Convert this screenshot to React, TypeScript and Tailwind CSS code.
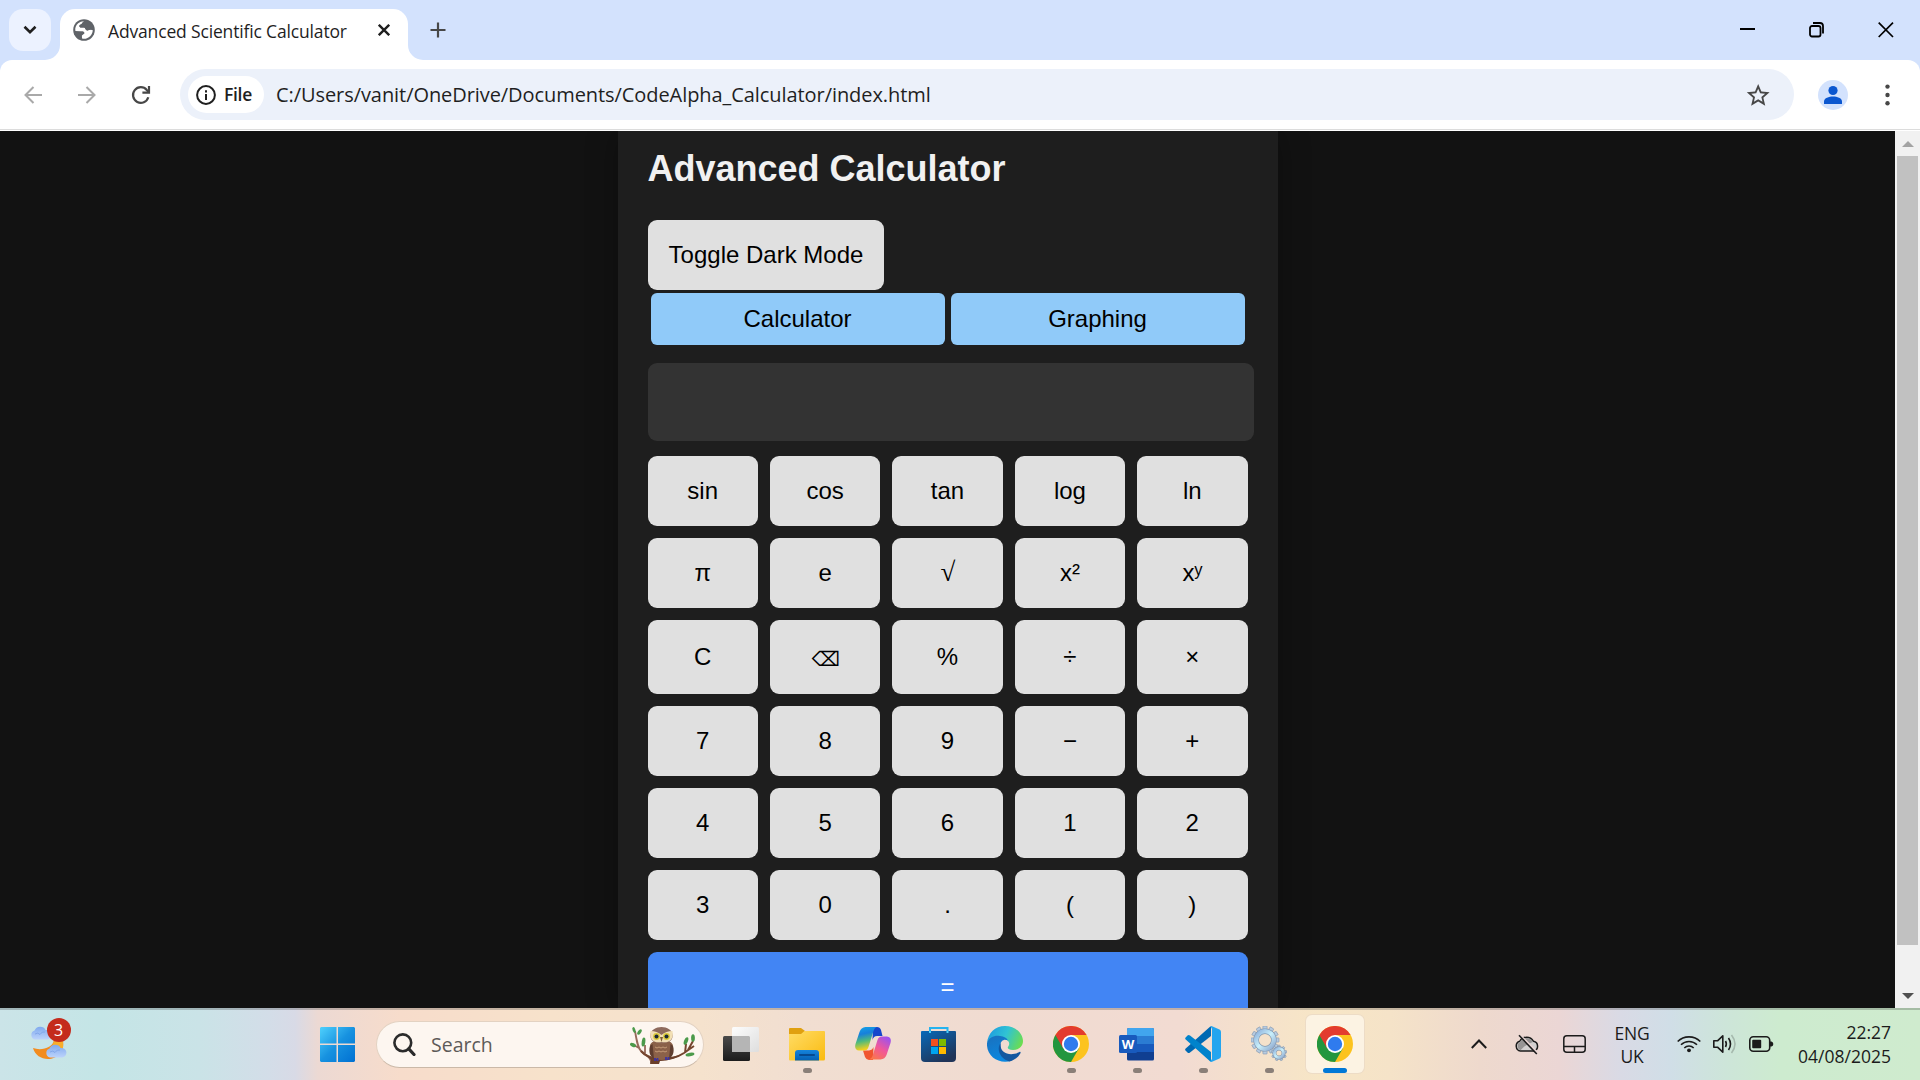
import React, { type ReactNode } from "react";

const ui = "font-['Open_Sans','Noto_Sans',sans-serif]";

const rows: string[][] = [
  ["sin", "cos", "tan", "log", "ln"],
  ["π", "e", "√", "x²", "xʸ"],
  ["C", "⌫", "%", "÷", "×"],
  ["7", "8", "9", "−", "+"],
  ["4", "5", "6", "1", "2"],
  ["3", "0", ".", "(", ")"],
];

function TabStrip() {
  return (
    <div className="flex h-[60px] shrink-0 items-start bg-[#d3e2fd]">
      <div className="mt-[9px] ml-[9px] flex size-[42px] items-center justify-center rounded-[14px] bg-[#ecf2ff]">
        <svg width="14" height="10" viewBox="0 0 14 10" fill="none" stroke="#1f1f1f" strokeWidth="2.6">
          <path d="M1.5 1.8 L7 7.2 L12.5 1.8" />
        </svg>
      </div>
      <div className="relative mt-[9px] ml-[9px] flex h-[51px] w-[348px] items-start rounded-t-[15px] bg-white">
        <svg className="absolute bottom-0 -left-[15px]" width="15" height="15" fill="#fff">
          <path d="M15 0 V15 H0 A15 15 0 0 0 15 0Z" />
        </svg>
        <svg className="absolute -right-[15px] bottom-0" width="15" height="15" fill="#fff">
          <path d="M0 0 V15 H15 A15 15 0 0 1 0 0Z" />
        </svg>
        <svg className="mt-[10px] ml-[13px] shrink-0" width="22" height="22" viewBox="0 0 22 22">
          <circle cx="11" cy="11" r="10.8" fill="#5f6368" />
          <path
            d="M12.3 2.3 C9 3 9.3 5.2 7.6 5.6 C5.8 6 6 8 7.3 8.4 L11.2 8.6 C12.6 8.8 12.2 11.2 14 11.4 C15.6 11.6 16 10.4 17.6 10.6 L19.8 11.2 C19.5 15.8 15.8 19.7 11.2 19.8 C10.2 19.8 9.2 19.5 9 19.2 L8.9 16.4 L11.4 14.4 C11.8 12.4 9 12.2 7.4 12.2 L2.4 12 C1.7 9 3 6 5.2 4.2 C7.2 2.5 10 1.8 12.3 2.3Z"
            fill="#fff"
          />
          <path d="M12.3 1.6 C9 2.6 9.8 5 7.8 5.6 C6 6.2 6.2 8 7.4 8.4 L11.2 8.6 C12.6 9 12.2 11.2 14 11.4 C15.6 11.6 16 10.4 20.4 10.6 C20.3 6 17 2 12.3 1.6Z" fill="#5f6368" />
        </svg>
        <span className={`${ui} mt-[9px] ml-[13px] w-[245px] text-[17.5px] leading-[27px] tracking-[-0.16px] whitespace-nowrap text-[#1f1f1f]`}>
          Advanced Scientific Calculator
        </span>
        <svg className="mt-[15px] ml-[25px] shrink-0" width="12" height="12" viewBox="0 0 12 12" stroke="#1f1f1f" strokeWidth="2.4">
          <path d="M0.8 0.8 L11.2 11.2 M11.2 0.8 L0.8 11.2" />
        </svg>
      </div>
      <svg className="mt-[22px] ml-[22px]" width="16" height="16" viewBox="0 0 16 16" stroke="#474747" strokeWidth="2.2">
        <path d="M8 0.5 V15.5 M0.5 8 H15.5" />
      </svg>
      <div className="mt-[22px] mr-[26px] ml-auto flex gap-[54px]">
        <svg width="15" height="16" stroke="#000" strokeWidth="2">
          <path d="M0 7 H15" />
        </svg>
        <svg width="15" height="16" viewBox="0 0 15 16" fill="none" stroke="#000" strokeWidth="1.8">
          <rect x="1" y="4" width="10.5" height="10.5" rx="2" />
          <path d="M4 1 H11 Q14 1 14 4 V11.5" />
        </svg>
        <svg width="16" height="16" viewBox="0 0 16 16" stroke="#000" strokeWidth="1.7">
          <path d="M0.7 0.7 L15 15 M15 0.7 L0.7 15" />
        </svg>
      </div>
    </div>
  );
}

function Toolbar() {
  return (
    <div className="flex h-[71px] shrink-0 bg-[#d3e2fd]">
      <div className="flex h-[71px] w-full items-start rounded-t-[12px] bg-white pt-[9px] shadow-[inset_0_-1px_0_#fff,inset_0_-2px_0_#dcdcdc]">
        <svg className="mt-[17px] ml-[24px]" width="18" height="18" viewBox="0 0 18 18" fill="none" stroke="#a9a9a9" strokeWidth="2">
          <path d="M18 9 H1.5 M9.5 1 L1.5 9 L9.5 17" />
        </svg>
        <svg className="mt-[17px] ml-[36px]" width="18" height="18" viewBox="0 0 18 18" fill="none" stroke="#a9a9a9" strokeWidth="2">
          <path d="M0 9 H16.5 M8.5 1 L16.5 9 L8.5 17" />
        </svg>
        <svg className="mt-[16px] ml-[35px]" width="20" height="20" viewBox="0 0 20 20" fill="none" stroke="#474747" strokeWidth="2.2">
          <path d="M17.3 12.2 A7.8 7.8 0 1 1 15.8 5 L17.6 7" />
          <path d="M18 1 V7.6 H11.4" />
        </svg>
        <div className="ml-[29px] flex h-[51px] w-[1614px] items-center rounded-full bg-[#ecf1fa] pl-[8px]">
          <div className="flex h-[37px] w-[76px] items-center rounded-full bg-white pl-[8px]">
            <svg width="20" height="20" viewBox="0 0 20 20" fill="none" stroke="#1f1f1f" strokeWidth="2">
              <circle cx="10" cy="10" r="8.9" />
              <path d="M10 9 V15 M10 5.3 V7.4" />
            </svg>
            <span className={`${ui} ml-[8px] text-[17.5px] font-semibold text-[#1f1f1f] tracking-[-0.3px]`}>File</span>
          </div>
          <span className={`${ui} ml-[12px] text-[20px] tracking-[-0.07px] whitespace-nowrap text-[#1f1f1f]`}>
            C:/Users/vanit/OneDrive/Documents/CodeAlpha_Calculator/index.html
          </span>
          <svg className="mr-[24px] ml-auto" width="24" height="24" viewBox="0 0 24 24" fill="#474747">
            <path d="M22 9.24l-7.19-.62L12 2 9.19 8.63 2 9.24l5.46 4.73L5.82 21 12 17.27 18.18 21l-1.63-7.03L22 9.24zM12 15.4l-3.76 2.27 1-4.28-3.32-2.88 4.38-.38L12 6.1l1.71 4.04 4.38.38-3.32 2.88 1 4.28L12 15.4z" transform="translate(-1.5 -1.3) scale(1.14)" />
          </svg>
        </div>
        <svg className="mt-[11px] ml-[24px]" width="30" height="30" viewBox="0 0 30 30">
          <circle cx="15" cy="15" r="15" fill="#d3e2fd" />
          <g fill="#0b57d0">
            <circle cx="15" cy="10.5" r="4.6" />
            <path d="M6 24 V21.5 C6 18 11 16.6 15 16.6 S24 18 24 21.5 V24Z" />
          </g>
        </svg>
        <svg className="mt-[15px] ml-[36.5px]" width="5" height="22" fill="#474747">
          <circle cx="2.5" cy="2.6" r="2.2" />
          <circle cx="2.5" cy="11" r="2.2" />
          <circle cx="2.5" cy="19.2" r="2.2" />
        </svg>
      </div>
    </div>
  );
}

function Key({ label, tall }: { label: string; tall: boolean }) {
  return (
    <button className={`flex items-center justify-center rounded-[9px] bg-[#e0e0e0] text-[24px] leading-[28px] text-black ${tall ? "h-[74px]" : "h-[70px]"}`}>
      {label === "⌫" ? (
        <span className="pt-[4px] pl-[1px] font-['DejaVu_Sans',sans-serif] text-[20px]">⌫</span>
      ) : label === "√" ? (
        <span className="pb-[2px] pl-[1px] font-['Liberation_Serif',serif] text-[27px]">√</span>
      ) : (
        label
      )}
    </button>
  );
}

function Calculator() {
  return (
    <div className="h-[877px] w-[660px] overflow-hidden bg-[#1e1e1e] px-[30px] font-['Liberation_Sans',Arial,sans-serif] shadow-[0_0_30px_rgba(0,0,0,0.3)]">
      <h1 className="mt-[17px] text-[36px] leading-[42px] font-bold text-[#f1f1f1]">Advanced Calculator</h1>
      <button className="mt-[30px] flex h-[70px] w-[236px] items-center justify-center rounded-[9px] bg-[#e0e0e0] pl-[1px] text-[24px] text-black">
        Toggle Dark Mode
      </button>
      <div className="mt-[3px] flex gap-[6px] px-[3px]">
        <button className="h-[52px] flex-1 rounded-[6px] bg-[#90caf9] text-[24px] text-black">Calculator</button>
        <button className="h-[52px] flex-1 rounded-[6px] bg-[#90caf9] text-[24px] text-black">Graphing</button>
      </div>
      <div className="mt-[18px] h-[78px] w-[606px] rounded-[9px] bg-[#333]" />
      <div className="mt-[15px] grid grid-cols-5 gap-[12px]">
        {rows.flatMap((row, r) => row.map((label) => <Key key={label} label={label} tall={r === 2} />))}
        <button className="col-span-5 h-[70px] rounded-[9px] bg-[#4285f4] text-[24px] text-white">=</button>
      </div>
    </div>
  );
}

function Scrollbar() {
  return (
    <div className="flex w-[25px] shrink-0 flex-col items-center bg-[#f1f1f1]">
      <svg className="mt-[10px]" width="12" height="6" fill="#a3a3a3">
        <path d="M0 6 L6 0 L12 6Z" />
      </svg>
      <div className="mt-[9px] h-[789px] w-[21px] bg-[#c1c1c1]" />
      <svg className="mt-auto mb-[9px]" width="12" height="6" fill="#505050">
        <path d="M0 0 L6 6 L12 0Z" />
      </svg>
    </div>
  );
}

function TaskItem({ children, running, active }: { children: ReactNode; running?: boolean; active?: boolean }) {
  return (
    <div className="flex w-[66px] justify-center pt-[5px]">
      <div className={`flex h-[58px] w-[58px] flex-col items-center rounded-[6px] pt-[11px] ${active ? "bg-[#fcf3e3] shadow-[0_0_0_1px_#eddcc6]" : ""}`}>
        <div className="h-[36px] w-[36px]">{children}</div>
        {active && <div className="mt-[6px] h-[5px] w-[24px] rounded-full bg-[#0078d7]" />}
        {running && <div className="mt-[6px] h-[5px] w-[9px] rounded-full bg-[#8a7f78]" />}
      </div>
    </div>
  );
}

function Chrome() {
  return (
    <svg width="36" height="36" viewBox="0 0 36 36">
      <circle cx="18" cy="18" r="18" fill="#fcc31e" />
      <path d="M18 18 L2.4 9 A18 18 0 0 0 18 36 L25.8 22.5Z" fill="#23963f" />
      <path d="M2.4 9 A18 18 0 0 1 33.6 9 L18 9 L10.2 22.5Z" fill="#e33b2e" />
      <circle cx="18" cy="18" r="9" fill="#fff" />
      <circle cx="18" cy="18" r="7.2" fill="#2f7bee" />
    </svg>
  );
}

function Cloud({ className }: { className: string }) {
  return (
    <svg className={className} width="22" height="14" viewBox="0 0 22 14">
      <path d="M5 13.5 A4.6 4.6 0 0 1 4.6 4.6 A6 6 0 0 1 15.6 4 A4.8 4.8 0 0 1 17.5 13.5Z" fill="url(#cloud)" />
      <path d="M5 8 Q8 6 10 8.5 Q12 5 15 6" fill="none" stroke="#7ba1e6" strokeWidth=".8" />
    </svg>
  );
}

function Gear({ cx, cy, r, teeth, hole }: { cx: number; cy: number; r: number; teeth: number; hole: number }) {
  return (
    <g transform={`translate(${cx} ${cy})`}>
      {Array.from({ length: teeth }, (_, i) => (
        <rect key={i} x={-r * 0.15} y={-r} width={r * 0.3} height={r * 0.5} rx=".5" fill="#b7cbe0" stroke="#8296ae" strokeWidth=".6" transform={`rotate(${(i * 360) / teeth})`} />
      ))}
      <circle r={(r * 0.8 + hole) / 2} fill="none" stroke="#8296ae" strokeWidth={r * 0.8 - hole + 0.8} />
      <circle r={(r * 0.8 + hole) / 2} fill="none" stroke="url(#gear)" strokeWidth={r * 0.8 - hole - 0.4} />
    </g>
  );
}

function Owl() {
  return (
    <svg width="66" height="38" viewBox="0 0 66 38">
      <path d="M21 37 C22 31 15 29 11 25 C8 22 7 17 5 5 M9 22 L2 18 M15 27 L15 19" fill="none" stroke="#96695a" strokeWidth="1.8" />
      <path d="M11 25 C16 31 22 32 27 33 C40 34 48 31 54 27 L64 20 M55 27 L56 18 M58 24 L63 15" fill="none" stroke="#76462f" strokeWidth="2" />
      <path d="M16 29 Q22 34 30 31 Q42 32 52 28 Q43 35 30 35 L29 38 H20 L21 34Z" fill="#6b3f2a" />
      <g fill="#4b9a4b">
        <ellipse cx="4" cy="4" rx="1.4" ry="3" transform="rotate(-20 4 4)" />
        <ellipse cx="9.500" cy="6" rx="1.6" ry="3.200" transform="rotate(35 9.5 6)" />
        <ellipse cx="3" cy="19" rx="3.200" ry="1.800" transform="rotate(25 3 19)" />
        <ellipse cx="13.500" cy="16" rx="1.800" ry="4.600" transform="rotate(8 13.5 16)" />
        <ellipse cx="56" cy="15" rx="1.900" ry="4" transform="rotate(22 56 15)" />
        <ellipse cx="63" cy="12" rx="1.900" ry="3.800" />
        <ellipse cx="60" cy="28.500" rx="4.500" ry="1.800" transform="rotate(-8 60 28.5)" />
      </g>
      <path d="M20 20 C20 12 43 12 43 20 C44 29 39 34 31.500 34 C24 34 19 29 20 20Z" fill="#8b6149" />
      <path d="M20 20 C18 27 21 31 24 33 L22.500 18Z M43 20 C45 27 42 31 39 33 L40.500 18Z" fill="#5f3d2f" />
      <path d="M20.500 10 C20 -2 43 -2 42.500 10 C43 20 20 20 20.500 10Z" fill="#8e6a5c" />
      <path d="M20.500 5 Q27 5 31.500 9 Q36 5 42.500 5 C44 16 37 17 31.500 16 C26 17 19 16 20.500 5Z" fill="#f2dfb4" />
      <circle cx="26.500" cy="10.500" r="3.400" fill="#d9c93a" />
      <circle cx="36.500" cy="10.500" r="3.400" fill="#d9c93a" />
      <circle cx="26.500" cy="10.500" r="2" fill="#1c2a35" />
      <circle cx="36.500" cy="10.500" r="2" fill="#1c2a35" />
      <path d="M30 11 H33 L31.500 16Z" fill="#7b5b34" />
      <path d="M25 21 q2 2 4 0 q2 2 4 0 q2 2 4 0 M25 25 q2 2 4 0 q2 2 4 0 q2 2 4 0" fill="none" stroke="#c39a77" strokeWidth="1" />
      <path d="M25 32 v3 M27.500 32 v3 M36 31 v3 M38.500 31 v3" stroke="#3b33a5" strokeWidth="1.800" />
    </svg>
  );
}

function Taskbar() {
  return (
    <div className="h-[72px] shrink-0 bg-[linear-gradient(90deg,#cbe4e8_0px,#c4e5e6_100px,#cae3e7_200px,#d3dde8_270px,#d8dae6_295px,#ecd9d3_318px,#f7dccb_400px,#f7e2cb_550px,#f5e2cd_700px,#f1ded1_800px,#f0dbd1_1000px,#f2dbd2_1180px,#f7e6c6_1320px,#f5e3c8_1390px,#eed9cd_1480px,#ebd6d5_1560px,#d9dae5_1620px,#d0dee7_1670px,#cde5d9_1725px,#cdebcf_1780px,#cfebce_1920px)]">
      <div className="flex h-full border-t-2 border-black/20">
        <svg width="0" height="0" className="absolute">
          <defs>
            <linearGradient id="cloud" x2="0" y2="1">
              <stop stopColor="#7fa9ee" />
              <stop offset="1" stopColor="#bcd3fb" />
            </linearGradient>
            <linearGradient id="gear" x2="1" y2="1">
              <stop stopColor="#8fb2dd" />
              <stop offset=".5" stopColor="#c9f0fb" />
              <stop offset="1" stopColor="#8fa9cf" />
            </linearGradient>
          </defs>
        </svg>
        <div className="relative ml-[30px] w-[41px]">
          <Cloud className="absolute top-[16px] left-0" />
          <svg className="absolute top-[30px] left-[3px]" width="32" height="20" viewBox="0 0 32 20">
            <path d="M0 8 C8 11 20 8 21 0 L30 1 C32 12 24 19 15 19 C8 19 2 15 0 8Z" fill="#f28c1f" />
            <path d="M21 0 L30 1 V8 H16 Q21 5 21 0Z" fill="#f8ad2c" />
          </svg>
          <Cloud className="absolute top-[34px] left-[15px]" />
          <span className={`${ui} absolute top-[8px] left-[16.500px] flex size-[24px] items-center justify-center rounded-full bg-[#c42b1c] text-[16px] text-white`}>3</span>
        </div>
        <svg className="mt-[17px] ml-[249px]" width="35" height="35" viewBox="0 0 35 35">
          <defs>
            <linearGradient id="win" x1="0" y1="0" x2="35" y2="35" gradientUnits="userSpaceOnUse">
              <stop stopColor="#4fd1fd" />
              <stop offset=".5" stopColor="#1792e0" />
              <stop offset="1" stopColor="#0070d2" />
            </linearGradient>
          </defs>
          <path d="M1 0 H16.500 V16.500 H0 V1Z M18 0 H34 L35 1 V16.500 H18Z M0 18 H16.500 V35 H1 L0 34Z M18 18 H35 V34 L34 35 H18Z" fill="url(#win)" />
        </svg>
        <div className="mt-[11px] ml-[21px] flex h-[47px] w-[328px] items-center rounded-full border border-[#e3d2c2] border-b-[#cbb9a8] bg-[#fdf6f0] pl-[16px]">
          <svg width="23" height="23" viewBox="0 0 23 23" fill="none" stroke="#2b2b2b" strokeWidth="2.600">
            <circle cx="9.800" cy="9.800" r="8.400" />
            <path d="M15.800 15.800 L21 21.500" strokeWidth="3.200" strokeLinecap="round" />
          </svg>
          <span className={`${ui} ml-[15px] text-[19.5px] text-[#5d5a58]`}>Search</span>
          <div className="mr-[7px] ml-auto">
            <Owl />
          </div>
        </div>
        <div className="ml-[4px] flex">
          <TaskItem>
            <svg width="36" height="36" viewBox="0 0 36 36">
              <defs>
                <linearGradient id="tv" x2="0" y2="1">
                  <stop stopColor="#4a4a4a" />
                  <stop offset="1" stopColor="#1c1c1c" />
                </linearGradient>
                <linearGradient id="tv2" x2="1" y2="1">
                  <stop stopColor="#fdfdfd" />
                  <stop offset="1" stopColor="#dedede" />
                </linearGradient>
              </defs>
              <rect y="10" width="27" height="25" rx="1.500" fill="url(#tv)" />
              <rect x="9" y="1" width="27" height="25" rx="1.500" fill="url(#tv2)" />
              <path d="M9 10 H26 L27 11 V26 H9Z" fill="#b5b5b5" />
            </svg>
          </TaskItem>
          <TaskItem running>
            <svg width="36" height="36" viewBox="0 0 36 36">
              <defs>
                <linearGradient id="fold" x2="1" y2="1">
                  <stop stopColor="#ffdc66" />
                  <stop offset="1" stopColor="#fabb10" />
                </linearGradient>
                <linearGradient id="foldb" x2="0" y2="1">
                  <stop stopColor="#1584dc" />
                  <stop offset="1" stopColor="#0561b4" />
                </linearGradient>
              </defs>
              <path d="M0 3 Q0 2 1 2 H12 L16 5 V9 H0Z" fill="#e0a010" />
              <path d="M0 8 H12 L15.500 5 H35 Q36 5 36 6 V33 Q36 34.500 34.500 34.500 H1 Q0 34.500 0 33Z" fill="url(#fold)" />
              <path d="M6 34.500 V27 Q6 24 9 24 H27 Q30 24 30 27 V34.500Z" fill="url(#foldb)" />
              <path d="M11 29 H25" stroke="#06498f" strokeWidth="2" strokeLinecap="round" />
            </svg>
          </TaskItem>
          <TaskItem>
            <svg width="36" height="36" viewBox="0 0 36 36">
              <defs>
                <linearGradient id="cpa" x2="0.2" y2="1">
                  <stop stopColor="#12a6e8" />
                  <stop offset=".35" stopColor="#1780dc" />
                  <stop offset=".65" stopColor="#4fba7c" />
                  <stop offset="1" stopColor="#f4d01c" />
                </linearGradient>
                <linearGradient id="cpb" x1=".8" x2=".2" y2="1">
                  <stop stopColor="#9b52ef" />
                  <stop offset=".5" stopColor="#f0579b" />
                  <stop offset="1" stopColor="#fb7849" />
                </linearGradient>
              </defs>
              <path d="M18 1 H22 Q25 1 26 4 L27.500 10 H22 Q18.500 10 17.500 14Z" fill="#1546cc" />
              <path d="M8 24.500 H14 Q17.500 24 18.500 21 L18 34 H14 Q11 33.500 10 31Z" fill="#f0552f" />
              <path d="M10.500 1 H22 Q19.500 1.500 18.500 5 L13.500 21 Q12.500 24.500 9 24.500 H4 Q-1 24 0.500 18 L4.500 6 Q6 1.500 10.500 1Z" fill="url(#cpa)" />
              <path d="M25.500 33.500 H14 Q16.500 33 17.500 30 L22.500 14 Q23.500 10.500 27 10.500 H32 Q37 11 35.500 17 L31.500 29 Q30 33 25.500 33.500Z" fill="url(#cpb)" />
            </svg>
          </TaskItem>
          <TaskItem>
            <svg width="36" height="36" viewBox="0 0 36 36">
              <defs>
                <linearGradient id="st" x2=".6" y2="1">
                  <stop stopColor="#0869b9" />
                  <stop offset="1" stopColor="#203458" />
                </linearGradient>
              </defs>
              <path d="M9 7 V2 H26.500 V7" fill="none" stroke="#25b3ef" strokeWidth="2" />
              <path d="M0 6 Q0 5 1 5 H34 Q35 5 35 6 V32 Q35 36 31 36 H4 Q0 36 0 32Z" fill="url(#st)" />
              <rect x="10" y="13" width="7" height="7" fill="#f25022" />
              <rect x="18" y="13" width="7" height="7" fill="#7fba00" />
              <rect x="10" y="21" width="7" height="7" fill="#00a4ef" />
              <rect x="18" y="21" width="7" height="7" fill="#ffb900" />
              <path d="M9 5 V7 M26.500 5 V7" stroke="#4ad0fa" strokeWidth="2" />
            </svg>
          </TaskItem>
          <TaskItem>
            <svg width="36" height="36" viewBox="0 0 36 36">
              <defs>
                <linearGradient id="eda" x1="0" y1=".3" x2="1" y2=".6">
                  <stop stopColor="#1d9be0" />
                  <stop offset=".5" stopColor="#30c3d4" />
                  <stop offset="1" stopColor="#6bdd50" />
                </linearGradient>
                <linearGradient id="edb" x2=".4" y2="1">
                  <stop stopColor="#1a70bd" />
                  <stop offset="1" stopColor="#0b87df" />
                </linearGradient>
              </defs>
              <path d="M0 17 C1 7 8 0 18 0 C28 0 36 7 36 15 C36 21 31 24 26 24 C22 24 20 22.500 21 21 C23.500 18 22 14 18 13.500 C12 9 4 11 0 17Z" fill="url(#eda)" />
              <path d="M0 17 C2 11 8 9 13 10 C17 10.500 20 12 21 14.500 C17 12.500 13.500 15 13.500 19 C13 26 18 32 25 34.500 C13 39 -1 31 0 17Z" fill="url(#edb)" />
              <path d="M13.700 17 C12 27 23 31 32.500 26 C33.500 25.500 34 26.500 33.300 27.500 C31 31.500 27 34.500 22.500 35.500 C13 33 9 23 13.700 17Z" fill="#1257a0" />
            </svg>
          </TaskItem>
          <TaskItem running>
            <Chrome />
          </TaskItem>
          <TaskItem running>
            <svg width="36" height="36" viewBox="0 0 36 36">
              <rect x="8" y="2" width="27" height="32.500" rx="1.500" fill="#103f91" />
              <path d="M8 10 V3.500 Q8 2 9.500 2 H33.500 Q35 2 35 3.500 V10Z" fill="#41a5ee" />
              <path d="M8 10 H35 V18 H8Z" fill="#2b7cd3" />
              <path d="M8 18 H35 V26 H8Z" fill="#185abd" />
              <rect y="9" width="18" height="18" rx="1.500" fill="#185abd" />
              <text x="9" y="22.500" textAnchor="middle" fill="#fff" fontFamily="Open Sans" fontWeight="700" fontSize="13">W</text>
            </svg>
          </TaskItem>
          <TaskItem running>
            <svg width="36" height="36" viewBox="0 0 36 36">
              <path d="M26 0.500 L26 10 L5 26.500 Q3.500 27.500 2.500 26.500 L0.500 24.500 Q-.3 23.500 .7 22.600 L25 .8Z" fill="#0069b3" />
              <path d="M.7 13.400 Q-.3 12.400 .6 11.500 L2.500 9.500 Q3.500 8.500 5 9.500 L26 26 V35.500 L25 35.200Z" fill="#0083cc" />
              <path d="M25.500 .3 L26.500 0 L34.500 3.500 Q36 4.200 36 6 V30 Q36 31.800 34.500 32.500 L26.500 36 L25 35.500 L27 33 V3Z" fill="#24a5ef" />
            </svg>
          </TaskItem>
          <TaskItem running>
            <svg width="36" height="36" viewBox="0 0 36 36">
              <Gear cx={14} cy={14} r={14} teeth={12} hole={6.5} />
              <Gear cx={28} cy={27} r={7.8} teeth={9} hole={3} />
            </svg>
          </TaskItem>
          <TaskItem active>
            <Chrome />
          </TaskItem>
        </div>
        <div className="mr-[29px] ml-auto flex items-start text-[#1b1b1b]">
          <svg className="mt-[29px]" width="16" height="10" viewBox="0 0 16 10" fill="none" stroke="currentColor" strokeWidth="2">
            <path d="M.8 9 L8 1.500 L15.200 9" />
          </svg>
          <svg className="mt-[24px] ml-[28px]" width="24" height="21" viewBox="0 0 24 21">
            <path d="M5.500 17 A5 5 0 0 1 4.700 7.300 A8 8 0 0 1 18.500 7.300 A5 5 0 0 1 19 17Z" fill="#d3d0d0" stroke="#1b1b1b" strokeWidth="1.500" />
            <path d="M5.500 16.200 A4.500 4.500 0 0 1 5 8 A7.300 7.300 0 0 1 18 8 Q11 10 5.500 16.200Z" fill="#979595" />
            <path d="M6 1.800 L22.300 18.500" stroke="#ebd6d5" strokeWidth="1.800" />
            <path d="M4 1.300 L21.800 20" stroke="#1b1b1b" strokeWidth="1.600" />
          </svg>
          <svg className="mt-[25px] ml-[24px]" width="23" height="18" viewBox="0 0 23 18" fill="none" stroke="currentColor" strokeWidth="1.500">
            <rect x=".8" y=".8" width="21.400" height="16.400" rx="3" />
            <path d="M1 11.500 H22 M11.500 11.500 V17" />
          </svg>
          <div className={`${ui} mt-[12px] ml-[26px] w-[40px] text-center text-[17.5px] leading-[23px] tracking-[-0.2px]`}>
            ENG
            <br />
            UK
          </div>
          <svg className="mt-[25px] ml-[25px]" width="24" height="18" viewBox="0 0 24 18" fill="none" stroke="currentColor" strokeWidth="1.600">
            <path d="M.7 6.500 A16 16 0 0 1 23.300 6.500 M4 9.800 A11.300 11.300 0 0 1 20 9.800 M7.300 13 A6.700 6.700 0 0 1 16.700 13" />
            <circle cx="12" cy="15.300" r="1.900" fill="currentColor" stroke="none" />
          </svg>
          <svg className="mt-[24px] ml-[12px]" width="24" height="20" viewBox="0 0 24 20" fill="none" stroke="currentColor" strokeWidth="1.600">
            <path d="M.8 6.800 H4.500 L9.800 1.800 V18.200 L4.500 13.200 H.8Z" strokeLinejoin="round" />
            <path d="M12.500 7 Q14.200 10 12.500 13 M15.500 4 Q19.500 10 15.500 16" />
            <path d="M18.500 1 Q25.500 10 18.500 19" stroke="#a5b9ad" />
          </svg>
          <svg className="mt-[26px] ml-[12px]" width="25" height="16" viewBox="0 0 25 16">
            <rect x=".8" y=".8" width="19.900" height="14.400" rx="3.500" fill="none" stroke="currentColor" strokeWidth="1.600" />
            <rect x="3.200" y="3.800" width="9" height="8.400" rx="1" fill="currentColor" />
            <path d="M21 5.500 H22.500 Q24.300 6 24.300 8 T22.500 10.500 H21Z" fill="currentColor" />
          </svg>
          <div className={`${ui} mt-[10px] w-[117px] text-right text-[17.5px] leading-[24px]`}>
            22:27
            <br />
            04/08/2025
          </div>
        </div>
      </div>
    </div>
  );
}

export default function App() {
  return (
    <div className="flex h-[1080px] w-[1920px] flex-col overflow-hidden">
      <TabStrip />
      <Toolbar />
      <div className="flex h-[877px] shrink-0 overflow-hidden">
        <main className="flex flex-1 justify-center bg-[#121212]">
          <Calculator />
        </main>
        <Scrollbar />
      </div>
      <Taskbar />
    </div>
  );
}
